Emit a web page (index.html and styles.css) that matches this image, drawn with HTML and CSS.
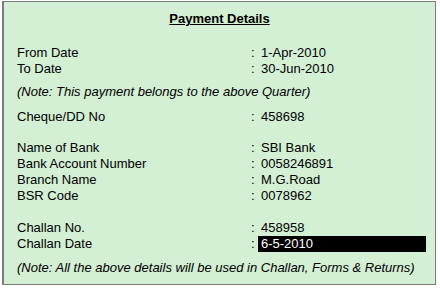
FILE: index.html
```html
<!DOCTYPE html>
<html lang="en">
<head>
    <meta charset="UTF-8">
    <meta name="viewport" content="width=device-width, initial-scale=1.0">
    <title>Payment Details</title>
    <link rel="stylesheet" href="styles.css">
</head>
<body>
    <div class="panel">
        <h2 class="title">Payment Details</h2>

        <div class="group period">
            <div class="row"><span class="label">From Date</span><span class="colon">:</span><span class="value">1-Apr-2010</span></div>
            <div class="row"><span class="label">To Date</span><span class="colon">:</span><span class="value">30-Jun-2010</span></div>
        </div>
        <p class="note note-quarter">(Note: This payment belongs to the above Quarter)</p>

        <div class="group cheque">
            <div class="row"><span class="label">Cheque/DD No</span><span class="colon">:</span><span class="value">458698</span></div>
        </div>

        <div class="group bank">
            <div class="row"><span class="label">Name of Bank</span><span class="colon">:</span><span class="value">SBI Bank</span></div>
            <div class="row"><span class="label">Bank Account Number</span><span class="colon">:</span><span class="value">0058246891</span></div>
            <div class="row"><span class="label">Branch Name</span><span class="colon">:</span><span class="value">M.G.Road</span></div>
            <div class="row"><span class="label">BSR Code</span><span class="colon">:</span><span class="value">0078962</span></div>
        </div>

        <div class="group challan">
            <div class="row"><span class="label">Challan No.</span><span class="colon">:</span><span class="value">458958</span></div>
            <div class="row"><span class="label">Challan Date</span><span class="colon">:</span><span class="value active">6-5-2010</span></div>
        </div>
        <p class="note note-returns">(Note: All the above details will be used in Challan, Forms &amp; Returns)</p>
    </div>
</body>
</html>
```

FILE: styles.css
```css
body { margin: 0; background: #fff; font-family: "Liberation Sans", Arial, sans-serif; font-size: 13px; line-height: 16px; color: #000; }
.panel { box-sizing: border-box; width: 434px; height: 284px; margin: 1px 0 0 2px; padding: 9px 0 0 13px; background: #d3efd4; border: 1px solid #7b7b7b; border-left-width: 2px; }
.title { margin: 0; font-size: 13px; font-weight: bold; text-align: center; text-decoration: underline; padding-right: 13px; }
.group { margin: 0; }
.period { margin-top: 18px; }
.cheque { margin-top: 9px; }
.bank { margin-top: 15px; }
.challan { margin-top: 16px; }
.row { display: grid; grid-template-columns: 234px 7px 168px; height: 16px; }
.colon { text-align: left; }
.value { padding-left: 3px; }
.value.active { background: #000; color: #fff; }
.note { margin: 0; font-style: italic; }
.note-quarter { margin-top: 7px; }
.note-returns { margin-top: 8px; }
```
